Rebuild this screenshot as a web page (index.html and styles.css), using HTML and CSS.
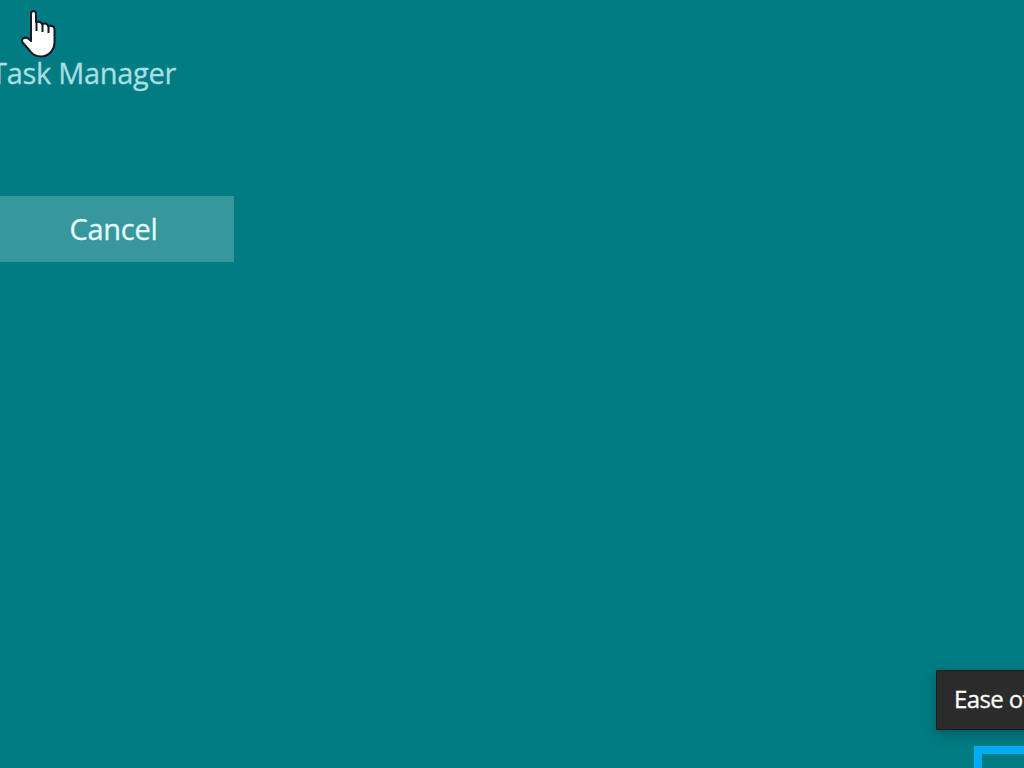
FILE: index.html
```html
<!DOCTYPE html>
<html lang="en">
<head>
    <meta charset="UTF-8">
    <meta name="viewport" content="width=device-width, initial-scale=1.0">
    <title>Task Manager</title>
    <link rel="stylesheet" href="styles.css">
</head>
<body>
    <main class="screen">
        <section class="options">
            <span class="option">Task Manager</span>
            <button class="cancel" type="button">Cancel</button>
        </section>
        <footer class="corner">
            <div class="tooltip">Ease of</div>
            <button class="access" type="button" aria-label="Ease of Access"></button>
        </footer>
    </main>
    <svg class="pointer" width="38" height="50" viewBox="0 0 38 50">
        <path d="M11 29 V5 Q11 2 13.5 2 Q16 2 16 5 V13 Q21 12 22 15 Q27 13.5 28 17 Q34 16 34.500 20 V34 Q34.500 39 31 43 Q27 47.500 21 47.500 Q14 47.500 10 42 L3 34 Q1 31 3 29.500 Q6 27.500 9 30 L11 32 Z" fill="#fff" stroke="#10182a" stroke-width="2" stroke-linejoin="round"/>
        <path d="M16.500 12 V22 M22.500 15 V23 M28.500 17 V24" fill="none" stroke="#10182a" stroke-width="2"/>
    </svg>
</body>
</html>
```
FILE: styles.css
```css
body {
    margin: 0;
    overflow: hidden;
    background-color: #007c82;
    font-family: "Open Sans", "Noto Sans", sans-serif;
}
.screen {
    display: flex;
    flex-direction: column;
    justify-content: space-between;
    height: 768px;
    overflow: hidden;
}
.options {
    display: flex;
    flex-direction: column;
    align-items: flex-start;
    padding-top: 53px;
}
.option {
    margin-left: -9px;
    font-size: 29px;
    line-height: 40px;
    letter-spacing: -0.3px;
    color: #a9dfe2;
    -webkit-text-stroke: 0.3px;
    white-space: nowrap;
}
.cancel {
    width: 234px;
    height: 66px;
    margin-top: 103px;
    padding: 0 7px 2px 0;
    border: none;
    background-color: #37979c;
    color: #e2faff;
    font-family: inherit;
    font-size: 29px;
    letter-spacing: -0.3px;
    -webkit-text-stroke: 0.3px;
}
.corner {
    display: flex;
    flex-direction: column;
    align-items: flex-start;
    gap: 16px;
    height: 98px;
    margin-left: 936px;
}
.tooltip {
    box-sizing: border-box;
    flex: none;
    width: 190px;
    height: 60px;
    padding-left: 17px;
    border: 1px solid #181d1e;
    background-color: #2b2b2b;
    box-shadow: 0 4px 12px rgba(0, 0, 0, 0.28);
    color: #fff;
    font-size: 24px;
    line-height: 56px;
    letter-spacing: -0.6px;
    -webkit-text-stroke: 0.3px;
    white-space: nowrap;
}
.access {
    box-sizing: border-box;
    flex: none;
    width: 100px;
    height: 100px;
    margin-left: 38px;
    border: 8px solid #00adf5;
    background-color: #007c82;
}
.pointer {
    position: absolute;
    left: 20px;
    top: 9px;
}
```
